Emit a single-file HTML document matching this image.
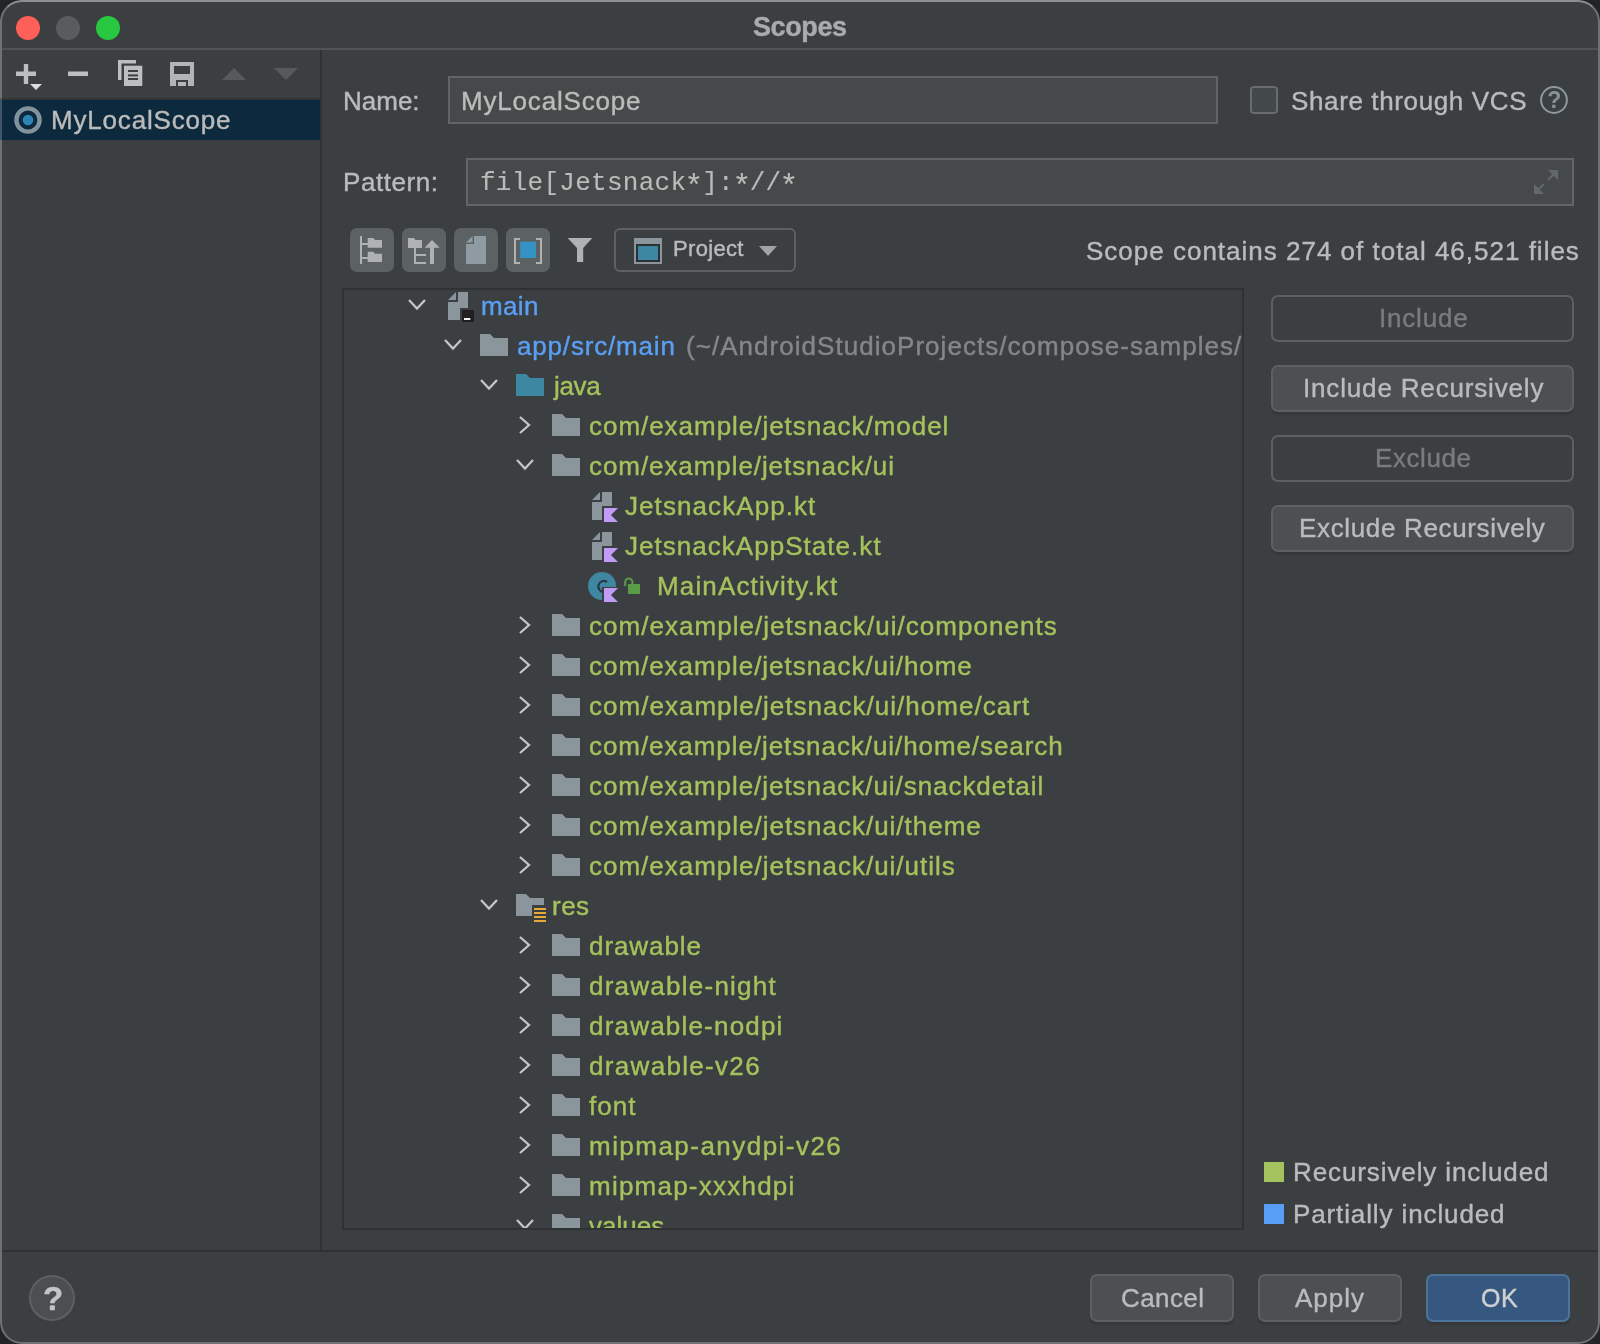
<!DOCTYPE html><html><head><meta charset="utf-8"><style>
*{margin:0;padding:0;box-sizing:border-box}
html,body{width:1600px;height:1344px;overflow:hidden;background:#232425}
body{position:relative;font-family:"Liberation Sans",sans-serif}
#win{position:absolute;left:0;top:0;width:1600px;height:1344px;background:#3c3f41;border:2px solid #6f7173;border-top-color:#8d8f91;border-radius:22px}
.t{position:absolute;white-space:pre;line-height:1;will-change:transform;-webkit-text-stroke:0.4px currentColor}
.hl{position:absolute}
.ic{position:absolute;overflow:visible}
.dot{position:absolute;width:24px;height:24px;border-radius:50%}
.fld{position:absolute;background:#45494a;border:2px solid #646464}
.cb{position:absolute;background:#43494a;border:2px solid #6b6b6b;border-radius:4px}
.tb{position:absolute;width:44px;height:44px;background:#5c6164;border-radius:7px}
.combo{position:absolute;border:2px solid #5e6060;border-radius:6px}
#tree{position:absolute;left:342px;top:288px;width:902px;height:942px;border:2px solid #2f3133}
.btn{position:absolute;background:#4c5052;border:2px solid #5e6060;border-radius:7px;box-shadow:0 3px 1px #35373a}
.btnd{position:absolute;border:2px solid #5e6060;border-radius:7px}
.okb{position:absolute;background:#365880;border:2px solid #4c7399;border-radius:7px;box-shadow:0 3px 1px #35373a}
.help{position:absolute;left:29px;top:1275px;width:46px;height:46px;border-radius:50%;background:#4b4f52;border:2px solid #5e6060}
</style></head><body><div id="win"></div>
<div class="t" style="left:752.50px;top:14.44px;font-size:27px;color:#a9abad;letter-spacing:-0.400px;font-family:'Liberation Sans', sans-serif;font-weight:bold;">Scopes</div>
<div class="hl" style="left:2px;top:48px;width:1596px;height:2px;background:#515355"></div>
<div class="dot" style="left:16px;top:16px;background:#fe5f57"></div>
<div class="dot" style="left:56px;top:16px;background:#5a5b5d"></div>
<div class="dot" style="left:96px;top:16px;background:#28c840"></div>
<div class="hl" style="left:320px;top:50px;width:2px;height:1201px;background:#2f3133"></div>
<div class="hl" style="left:2px;top:98px;width:318px;height:2px;background:#323436"></div>
<div class="hl" style="left:2px;top:100px;width:318px;height:40px;background:#0d293e"></div>
<svg class="ic" style="left:14px;top:106px" width="28" height="28"><circle cx="14" cy="14" r="11.6" fill="none" stroke="#83939e" stroke-width="4.4"/><circle cx="14" cy="14" r="5.3" fill="#2d83b3"/></svg>
<div class="t" style="left:51.00px;top:107.29px;font-size:26px;color:#bbbbbb;letter-spacing:0.818px;font-family:'Liberation Sans', sans-serif;font-weight:normal;">MyLocalScope</div>
<svg class="ic" style="left:0px;top:50px" width="320" height="48"><rect x="16" y="21.5" width="20" height="4.5" fill="#bdbec0"/><rect x="23.8" y="14" width="4.4" height="20" fill="#bdbec0"/><polygon points="30,34 42,34 36,40" fill="#dcdcdc"/><rect x="68" y="21.5" width="20" height="4.5" fill="#bdbec0"/><path d="M118 10 H136 V13.5 H121.5 V30 H118 Z" fill="#bdbec0"/><rect x="124" y="15.7" width="18.3" height="20.3" fill="#bdbec0"/><rect x="128" y="20" width="10" height="2" fill="#3c3f41"/><rect x="128" y="24.4" width="10" height="2" fill="#3c3f41"/><rect x="128" y="28" width="10" height="2" fill="#3c3f41"/><path d="M170 12 H194 V36 H170 Z M174 16 V24 H190 V16 Z M176 30 V36 H188 V30 Z" fill="#b3b4b5" fill-rule="evenodd"/><rect x="178" y="32" width="8" height="4" fill="#b3b4b5"/><polygon points="222,30 246,30 234,18" fill="#58595b"/><polygon points="274,18 298,18 286,30" fill="#58595b"/></svg>
<div class="t" style="left:343.00px;top:88.09px;font-size:26px;color:#bbbbbb;letter-spacing:0.000px;font-family:'Liberation Sans', sans-serif;font-weight:normal;">Name:</div>
<div class="fld" style="left:448px;top:76px;width:770px;height:48px"></div>
<div class="t" style="left:461.00px;top:88.09px;font-size:26px;color:#bbbbbb;letter-spacing:0.818px;font-family:'Liberation Sans', sans-serif;font-weight:normal;">MyLocalScope</div>
<div class="cb" style="left:1250px;top:86px;width:28px;height:28px"></div>
<div class="t" style="left:1291.00px;top:88.09px;font-size:26px;color:#bbbbbb;letter-spacing:0.625px;font-family:'Liberation Sans', sans-serif;font-weight:normal;">Share through VCS</div>
<svg class="ic" style="left:0;top:0" width="1600" height="300"><circle cx="1554" cy="100" r="12.9" fill="none" stroke="#8c99a1" stroke-width="2"/><text x="1554.3" y="108" text-anchor="middle" font-family="Liberation Sans" font-weight="bold" font-size="23" fill="#85929a">?</text></svg>
<div class="t" style="left:343.00px;top:169.09px;font-size:26px;color:#bbbbbb;letter-spacing:0.571px;font-family:'Liberation Sans', sans-serif;font-weight:normal;">Pattern:</div>
<div class="fld" style="left:466px;top:158px;width:1108px;height:48px"></div>
<div class="t" style="left:480.00px;top:170.29px;font-size:26px;color:#bbbbbb;letter-spacing:0.263px;font-family:'Liberation Mono', monospace;font-weight:normal;-webkit-text-stroke:0.1px currentColor">file[Jetsnack<span style="display:inline-block;transform:translateY(5px) scale(1.2)">*</span>]:<span style="display:inline-block;transform:translateY(5px) scale(1.2)">*</span>//<span style="display:inline-block;transform:translateY(5px) scale(1.2)">*</span></div>
<svg class="ic" style="left:0;top:0" width="1600" height="300"><polygon points="1548,170 1558,170 1558,180" fill="#62696d"/><line x1="1548" y1="180" x2="1553.5" y2="174.5" stroke="#62696d" stroke-width="2"/><polygon points="1534,184 1534,194 1544,194" fill="#62696d"/><line x1="1544" y1="184" x2="1538.5" y2="189.5" stroke="#62696d" stroke-width="2"/></svg>
<div class="tb" style="left:350px;top:228px"></div>
<div class="tb" style="left:402px;top:228px"></div>
<div class="tb" style="left:454px;top:228px"></div>
<div class="tb" style="left:506px;top:228px"></div>
<svg class="ic" style="left:340px;top:228px" width="280" height="44"><rect x="20" y="8" width="2" height="28" fill="#afb1b3"/><rect x="22" y="15" width="6" height="2" fill="#afb1b3"/><rect x="22" y="29" width="6" height="2" fill="#afb1b3"/><path d="M27.7 10 H33.5 L35 12 H42 V19.7 H27.7 Z" fill="#afb1b3"/><path d="M27.7 23.8 H33.5 L35 25.8 H42 V34 H27.7 Z" fill="#afb1b3"/><path d="M68 10 H74 L75.5 12 H82 V20 H68 Z" fill="#afb1b3"/><rect x="74" y="20" width="2" height="16" fill="#afb1b3"/><rect x="74" y="26" width="12" height="2" fill="#afb1b3"/><rect x="74" y="34" width="12" height="2" fill="#afb1b3"/><polygon points="84.6,19.7 92,12 99.7,19.7" fill="#afb1b3"/><rect x="90" y="19" width="4" height="17" fill="#afb1b3"/><path d="M134 8 H146 V36 H126 V16 H134 Z" fill="#8e9ba3"/><polygon points="126,14.5 132.5,8 132.5,14.5" fill="#8e9ba3"/><path d="M174 10 H180 V12 H176 V34 H180 V36 H174 Z" fill="#afb1b3"/><path d="M202 10 H196 V12 H200 V34 H196 V36 H202 Z" fill="#afb1b3"/><rect x="180.2" y="13.7" width="15.8" height="16.3" fill="#3592c4"/><polygon points="227.6,10 252.3,10 243.2,20 243.2,34 237,34 237,20" fill="#afb1b3"/></svg>
<div class="combo" style="left:614px;top:228px;width:182px;height:44px"></div>
<svg class="ic" style="left:0;top:0" width="1600" height="300"><rect x="634" y="238" width="28" height="26" fill="#8a959c"/><rect x="636" y="244" width="24" height="18" fill="#2e3133"/><rect x="638" y="246" width="20" height="14" fill="#3d87a2"/><polygon points="759,246 777,246 768,256" fill="#a0a2a4"/></svg>
<div class="t" style="left:673.00px;top:238.18px;font-size:22px;color:#bbbbbb;letter-spacing:0.333px;font-family:'Liberation Sans', sans-serif;font-weight:normal;">Project</div>
<div class="t" style="left:1086.40px;top:238.09px;font-size:26px;color:#bbbbbb;letter-spacing:1.000px;font-family:'Liberation Sans', sans-serif;font-weight:normal;">Scope contains 274 of total 46,521 files</div>
<div id="tree"></div>
<div style="position:absolute;left:344px;top:290px;width:898px;height:938px;overflow:hidden"><div style="position:absolute;left:-344px;top:-290px;width:1600px;height:1344px"><svg class="ic" style="left:0;top:0" width="1600" height="1344"><polyline points="409,300 417,308.5 425,300" fill="none" stroke="#c5c5c5" stroke-width="2.3"/><polygon points="448,300 456,292 456,300" fill="#8a959c"/><rect x="458" y="292" width="10" height="16" fill="#8a959c"/><rect x="448" y="302" width="12" height="18" fill="#8a959c"/><rect x="458" y="302" width="2" height="6" fill="#8a959c"/><rect x="460" y="308" width="2" height="14" fill="#3c3f41"/><rect x="460" y="308" width="14" height="2" fill="#3c3f41"/><rect x="462" y="310" width="12" height="12" fill="#231f20"/><rect x="464" y="318" width="6.3" height="2" fill="#f2f2f2"/><polyline points="445,340 453,348.5 461,340" fill="none" stroke="#c5c5c5" stroke-width="2.3"/><path d="M480 334 H490 L494 338 H508 V356 H480 Z" fill="#8a959c"/><polyline points="481,380 489,388.5 497,380" fill="none" stroke="#c5c5c5" stroke-width="2.3"/><path d="M516 374 H526 L530 378 H544 V396 H516 Z" fill="#3d87a2"/><polyline points="520,417 529,425 520,433" fill="none" stroke="#c5c5c5" stroke-width="2.3"/><path d="M552 414 H562 L566 418 H580 V436 H552 Z" fill="#8a959c"/><polyline points="517,460 525,468.5 533,460" fill="none" stroke="#c5c5c5" stroke-width="2.3"/><path d="M552 454 H562 L566 458 H580 V476 H552 Z" fill="#8a959c"/><polygon points="592,500 600,492 600,500" fill="#8a959c"/><rect x="602" y="492" width="10" height="14" fill="#8a959c"/><rect x="592" y="502" width="10" height="18" fill="#8a959c"/><rect x="602" y="502" width="0" height="0" fill="#8a959c"/><polygon points="604,508 618,508 611,515 618,522 604,522" fill="#c09cf7"/><polygon points="592,540 600,532 600,540" fill="#8a959c"/><rect x="602" y="532" width="10" height="14" fill="#8a959c"/><rect x="592" y="542" width="10" height="18" fill="#8a959c"/><rect x="602" y="542" width="0" height="0" fill="#8a959c"/><polygon points="604,548 618,548 611,555 618,562 604,562" fill="#c09cf7"/><circle cx="602" cy="586" r="14" fill="#3f86a1"/><path d="M607 582 A5.5 5.5 0 1 0 604 592" fill="none" stroke="#263a45" stroke-width="2.2"/><polygon points="602,587 620,587 620,603 602,603" fill="#3c3f41"/><polygon points="604,588 618,588 611,595 618,602 604,602" fill="#c09cf7"/><rect x="628" y="584" width="12" height="10" fill="#5a9b45"/><path d="M625.2 586 V582 A3.6 3.6 0 0 1 632.4 582 V584" fill="none" stroke="#5a9b45" stroke-width="2"/><polyline points="520,617 529,625 520,633" fill="none" stroke="#c5c5c5" stroke-width="2.3"/><path d="M552 614 H562 L566 618 H580 V636 H552 Z" fill="#8a959c"/><polyline points="520,657 529,665 520,673" fill="none" stroke="#c5c5c5" stroke-width="2.3"/><path d="M552 654 H562 L566 658 H580 V676 H552 Z" fill="#8a959c"/><polyline points="520,697 529,705 520,713" fill="none" stroke="#c5c5c5" stroke-width="2.3"/><path d="M552 694 H562 L566 698 H580 V716 H552 Z" fill="#8a959c"/><polyline points="520,737 529,745 520,753" fill="none" stroke="#c5c5c5" stroke-width="2.3"/><path d="M552 734 H562 L566 738 H580 V756 H552 Z" fill="#8a959c"/><polyline points="520,777 529,785 520,793" fill="none" stroke="#c5c5c5" stroke-width="2.3"/><path d="M552 774 H562 L566 778 H580 V796 H552 Z" fill="#8a959c"/><polyline points="520,817 529,825 520,833" fill="none" stroke="#c5c5c5" stroke-width="2.3"/><path d="M552 814 H562 L566 818 H580 V836 H552 Z" fill="#8a959c"/><polyline points="520,857 529,865 520,873" fill="none" stroke="#c5c5c5" stroke-width="2.3"/><path d="M552 854 H562 L566 858 H580 V876 H552 Z" fill="#8a959c"/><polyline points="481,900 489,908.5 497,900" fill="none" stroke="#c5c5c5" stroke-width="2.3"/><path d="M516 894 H526 L530 898 H544 V916 H516 Z" fill="#8a959c"/><rect x="532" y="905" width="14" height="15" fill="#3c3f41"/><rect x="534" y="908" width="12" height="2" fill="#e9a93a"/><rect x="534" y="912" width="12" height="2" fill="#e9a93a"/><rect x="534" y="916" width="12" height="2" fill="#e9a93a"/><rect x="534" y="920" width="12" height="2" fill="#e9a93a"/><polyline points="520,937 529,945 520,953" fill="none" stroke="#c5c5c5" stroke-width="2.3"/><path d="M552 934 H562 L566 938 H580 V956 H552 Z" fill="#8a959c"/><polyline points="520,977 529,985 520,993" fill="none" stroke="#c5c5c5" stroke-width="2.3"/><path d="M552 974 H562 L566 978 H580 V996 H552 Z" fill="#8a959c"/><polyline points="520,1017 529,1025 520,1033" fill="none" stroke="#c5c5c5" stroke-width="2.3"/><path d="M552 1014 H562 L566 1018 H580 V1036 H552 Z" fill="#8a959c"/><polyline points="520,1057 529,1065 520,1073" fill="none" stroke="#c5c5c5" stroke-width="2.3"/><path d="M552 1054 H562 L566 1058 H580 V1076 H552 Z" fill="#8a959c"/><polyline points="520,1097 529,1105 520,1113" fill="none" stroke="#c5c5c5" stroke-width="2.3"/><path d="M552 1094 H562 L566 1098 H580 V1116 H552 Z" fill="#8a959c"/><polyline points="520,1137 529,1145 520,1153" fill="none" stroke="#c5c5c5" stroke-width="2.3"/><path d="M552 1134 H562 L566 1138 H580 V1156 H552 Z" fill="#8a959c"/><polyline points="520,1177 529,1185 520,1193" fill="none" stroke="#c5c5c5" stroke-width="2.3"/><path d="M552 1174 H562 L566 1178 H580 V1196 H552 Z" fill="#8a959c"/><polyline points="517,1220 525,1228.5 533,1220" fill="none" stroke="#c5c5c5" stroke-width="2.3"/><path d="M552 1214 H562 L566 1218 H580 V1236 H552 Z" fill="#8a959c"/></svg><div class="t" style="left:481.00px;top:293.29px;font-size:26px;color:#5a9ff6;letter-spacing:0.333px;font-family:'Liberation Sans', sans-serif;font-weight:normal;">main</div><div class="t" style="left:517.00px;top:333.29px;font-size:26px;color:#5a9ff6;letter-spacing:0.818px;font-family:'Liberation Sans', sans-serif;font-weight:normal;">app/src/main</div><div class="t" style="left:685.50px;top:333.29px;font-size:26px;color:#868686;letter-spacing:1.038px;font-family:'Liberation Sans', sans-serif;font-weight:normal;">(~/AndroidStudioProjects/compose-samples/</div><div class="t" style="left:1244.00px;top:333.29px;font-size:26px;color:#868686;letter-spacing:0.000px;font-family:'Liberation Sans', sans-serif;font-weight:normal;">app/src/main)</div><div class="t" style="left:554.00px;top:373.29px;font-size:26px;color:#a5c25c;letter-spacing:-0.333px;font-family:'Liberation Sans', sans-serif;font-weight:normal;">java</div><div class="t" style="left:589.00px;top:413.29px;font-size:26px;color:#a5c25c;letter-spacing:0.964px;font-family:'Liberation Sans', sans-serif;font-weight:normal;">com/example/jetsnack/model</div><div class="t" style="left:589.00px;top:453.29px;font-size:26px;color:#a5c25c;letter-spacing:0.923px;font-family:'Liberation Sans', sans-serif;font-weight:normal;">com/example/jetsnack/ui</div><div class="t" style="left:625.00px;top:493.29px;font-size:26px;color:#a5c25c;letter-spacing:1.077px;font-family:'Liberation Sans', sans-serif;font-weight:normal;">JetsnackApp.kt</div><div class="t" style="left:625.00px;top:533.29px;font-size:26px;color:#a5c25c;letter-spacing:1.033px;font-family:'Liberation Sans', sans-serif;font-weight:normal;">JetsnackAppState.kt</div><div class="t" style="left:657.00px;top:573.29px;font-size:26px;color:#a5c25c;letter-spacing:1.143px;font-family:'Liberation Sans', sans-serif;font-weight:normal;">MainActivity.kt</div><div class="t" style="left:589.00px;top:613.29px;font-size:26px;color:#a5c25c;letter-spacing:1.038px;font-family:'Liberation Sans', sans-serif;font-weight:normal;">com/example/jetsnack/ui/components</div><div class="t" style="left:589.00px;top:653.29px;font-size:26px;color:#a5c25c;letter-spacing:0.959px;font-family:'Liberation Sans', sans-serif;font-weight:normal;">com/example/jetsnack/ui/home</div><div class="t" style="left:589.00px;top:693.29px;font-size:26px;color:#a5c25c;letter-spacing:1.019px;font-family:'Liberation Sans', sans-serif;font-weight:normal;">com/example/jetsnack/ui/home/cart</div><div class="t" style="left:589.00px;top:733.29px;font-size:26px;color:#a5c25c;letter-spacing:0.926px;font-family:'Liberation Sans', sans-serif;font-weight:normal;">com/example/jetsnack/ui/home/search</div><div class="t" style="left:589.00px;top:773.29px;font-size:26px;color:#a5c25c;letter-spacing:0.950px;font-family:'Liberation Sans', sans-serif;font-weight:normal;">com/example/jetsnack/ui/snackdetail</div><div class="t" style="left:589.00px;top:813.29px;font-size:26px;color:#a5c25c;letter-spacing:0.986px;font-family:'Liberation Sans', sans-serif;font-weight:normal;">com/example/jetsnack/ui/theme</div><div class="t" style="left:589.00px;top:853.29px;font-size:26px;color:#a5c25c;letter-spacing:0.986px;font-family:'Liberation Sans', sans-serif;font-weight:normal;">com/example/jetsnack/ui/utils</div><div class="t" style="left:552.00px;top:893.29px;font-size:26px;color:#a5c25c;letter-spacing:0.500px;font-family:'Liberation Sans', sans-serif;font-weight:normal;">res</div><div class="t" style="left:589.00px;top:933.29px;font-size:26px;color:#a5c25c;letter-spacing:0.929px;font-family:'Liberation Sans', sans-serif;font-weight:normal;">drawable</div><div class="t" style="left:589.00px;top:973.29px;font-size:26px;color:#a5c25c;letter-spacing:1.246px;font-family:'Liberation Sans', sans-serif;font-weight:normal;">drawable-night</div><div class="t" style="left:589.00px;top:1013.29px;font-size:26px;color:#a5c25c;letter-spacing:1.200px;font-family:'Liberation Sans', sans-serif;font-weight:normal;">drawable-nodpi</div><div class="t" style="left:589.00px;top:1053.29px;font-size:26px;color:#a5c25c;letter-spacing:1.318px;font-family:'Liberation Sans', sans-serif;font-weight:normal;">drawable-v26</div><div class="t" style="left:589.00px;top:1093.29px;font-size:26px;color:#a5c25c;letter-spacing:1.067px;font-family:'Liberation Sans', sans-serif;font-weight:normal;">font</div><div class="t" style="left:589.00px;top:1133.29px;font-size:26px;color:#a5c25c;letter-spacing:1.469px;font-family:'Liberation Sans', sans-serif;font-weight:normal;">mipmap-anydpi-v26</div><div class="t" style="left:589.00px;top:1173.29px;font-size:26px;color:#a5c25c;letter-spacing:1.231px;font-family:'Liberation Sans', sans-serif;font-weight:normal;">mipmap-xxxhdpi</div><div class="t" style="left:589.00px;top:1213.29px;font-size:26px;color:#a5c25c;letter-spacing:0.000px;font-family:'Liberation Sans', sans-serif;font-weight:normal;">values</div></div></div>
<div class="btnd" style="left:1270.5px;top:294.5px;width:303px;height:47px"></div>
<div class="btn" style="left:1270.5px;top:364.5px;width:303px;height:47px"></div>
<div class="btnd" style="left:1270.5px;top:434.5px;width:303px;height:47px"></div>
<div class="btn" style="left:1270.5px;top:504.5px;width:303px;height:47px"></div>
<div class="hl" style="left:1264px;top:1162px;width:20px;height:20px;background:#a4c35e"></div>
<div class="hl" style="left:1264px;top:1204px;width:20px;height:20px;background:#589df6"></div>
<div class="t" style="left:1292.50px;top:1159.29px;font-size:26px;color:#bbbbbb;letter-spacing:0.895px;font-family:'Liberation Sans', sans-serif;font-weight:normal;">Recursively included</div>
<div class="t" style="left:1292.50px;top:1201.29px;font-size:26px;color:#bbbbbb;letter-spacing:0.882px;font-family:'Liberation Sans', sans-serif;font-weight:normal;">Partially included</div>
<div class="hl" style="left:2px;top:1250px;width:1596px;height:2px;background:#2f3133"></div>
<div class="help"></div>
<div class="btn" style="left:1090px;top:1274px;width:144px;height:48px"></div>
<div class="btn" style="left:1258px;top:1274px;width:144px;height:48px"></div>
<div class="okb" style="left:1426px;top:1274px;width:144px;height:48px"></div><div class="t" style="left:1378.75px;top:304.79px;font-size:26px;color:#7a7b7c;letter-spacing:0.792px;font-family:'Liberation Sans', sans-serif;font-weight:normal;">Include</div>
<div class="t" style="left:1302.50px;top:374.79px;font-size:26px;color:#bbbbbb;letter-spacing:0.833px;font-family:'Liberation Sans', sans-serif;font-weight:normal;">Include Recursively</div>
<div class="t" style="left:1375.00px;top:444.79px;font-size:26px;color:#7a7b7c;letter-spacing:0.583px;font-family:'Liberation Sans', sans-serif;font-weight:normal;">Exclude</div>
<div class="t" style="left:1299.25px;top:514.79px;font-size:26px;color:#bbbbbb;letter-spacing:0.653px;font-family:'Liberation Sans', sans-serif;font-weight:normal;">Exclude Recursively</div>
<div class="t" style="left:1121.00px;top:1285.29px;font-size:26px;color:#bbbbbb;letter-spacing:0.400px;font-family:'Liberation Sans', sans-serif;font-weight:normal;">Cancel</div>
<div class="t" style="left:1295.00px;top:1285.29px;font-size:26px;color:#bbbbbb;letter-spacing:1.000px;font-family:'Liberation Sans', sans-serif;font-weight:normal;">Apply</div>
<div class="t" style="left:1480.50px;top:1286.14px;font-size:25px;color:#d0d0d0;letter-spacing:0.500px;font-family:'Liberation Sans', sans-serif;font-weight:normal;">OK</div>
<div class="hl" style="left:0;top:100px;width:2px;height:40px;background:#3f5668"></div><div class="hl" style="left:0;top:98px;width:2px;height:2px;background:#58595a"></div>
<div class="t" style="left:43px;top:1282px;font-size:33px;font-weight:bold;color:#c4c5c6">?</div></body></html>
